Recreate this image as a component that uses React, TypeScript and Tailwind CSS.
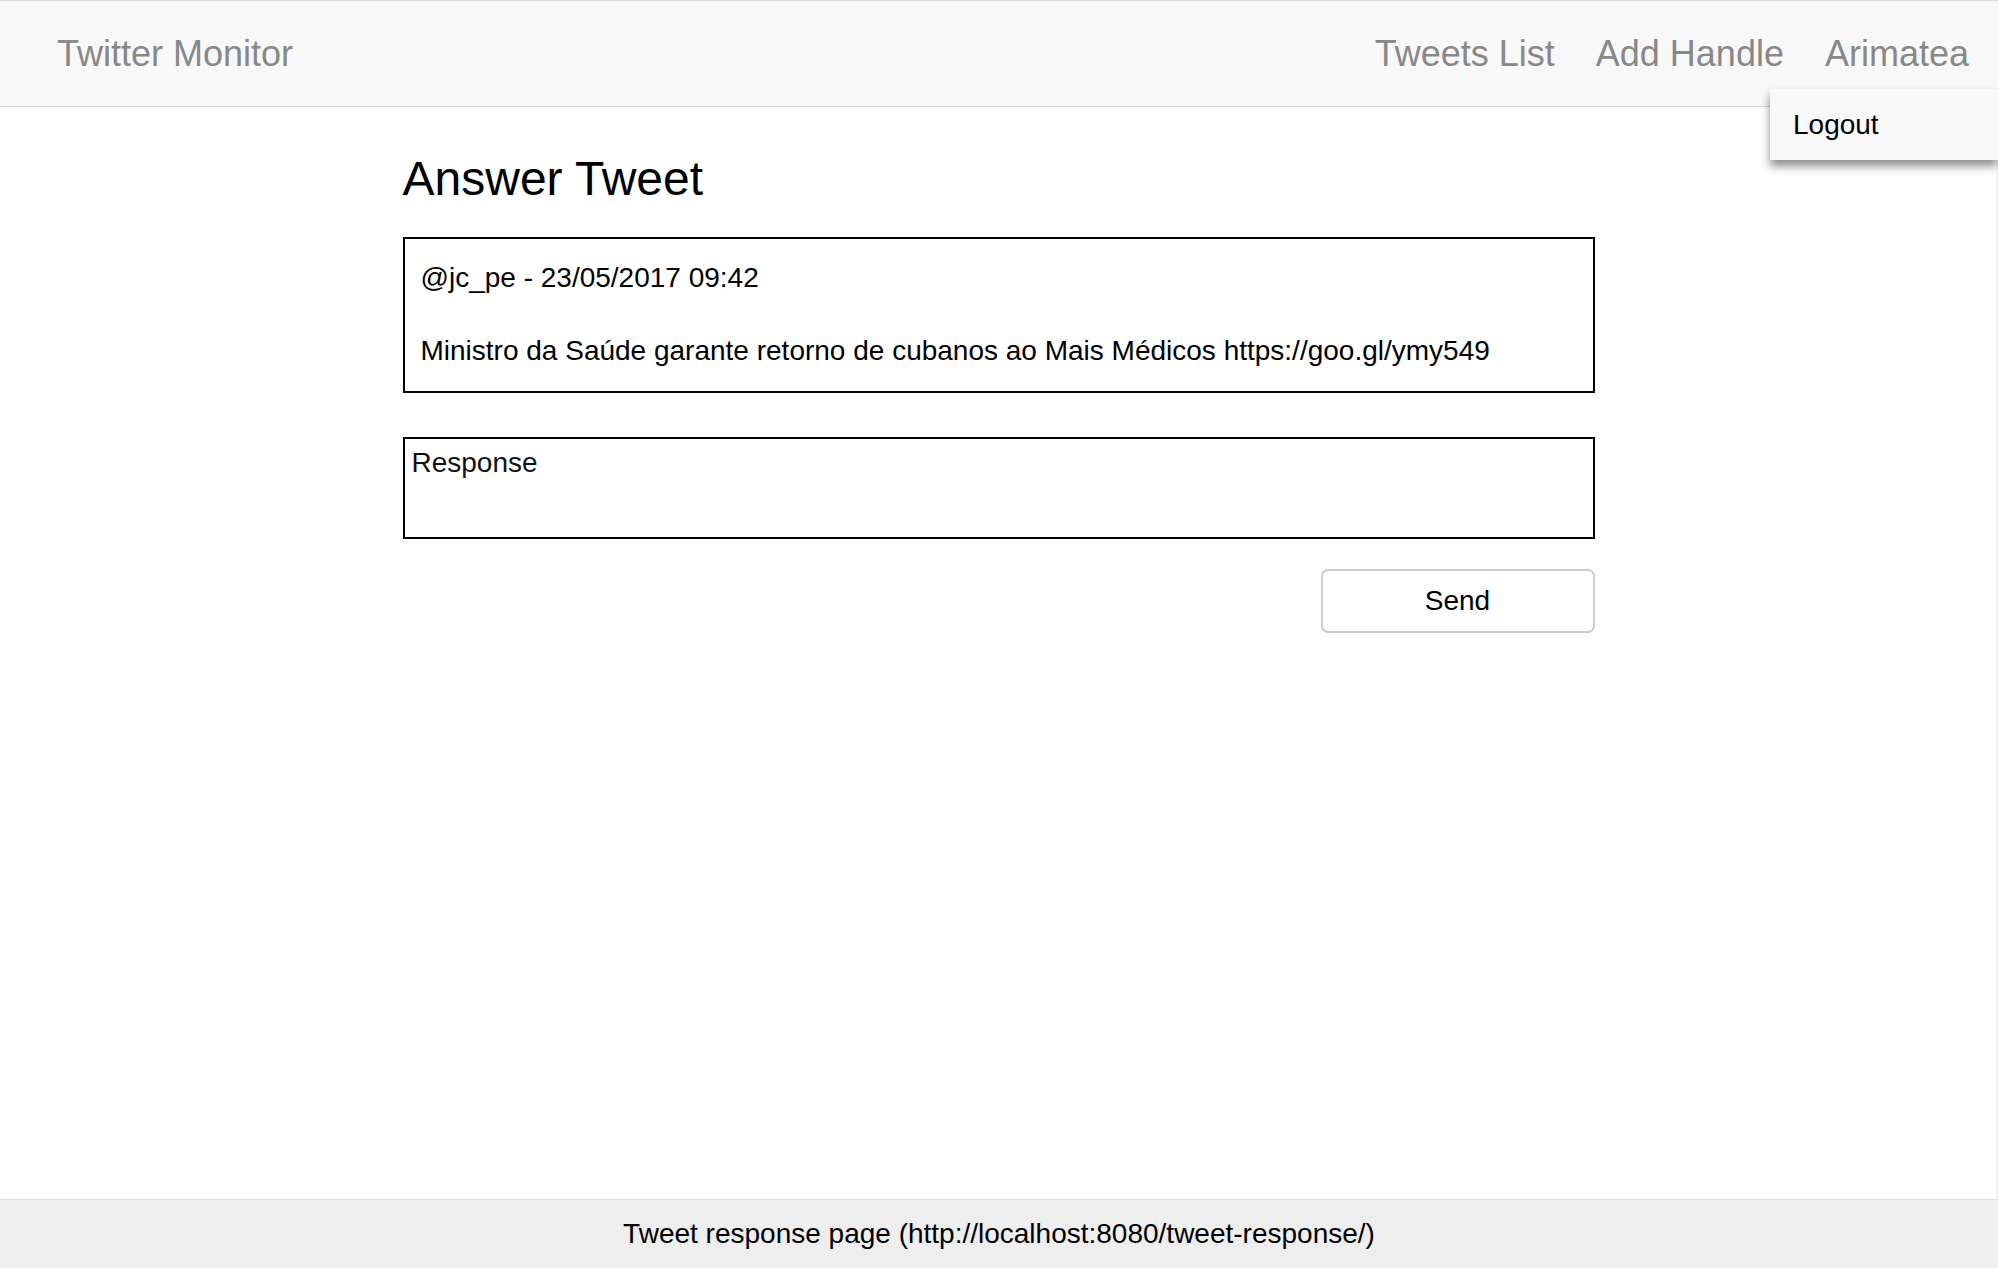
const navLinks = ["Tweets List", "Add Handle", "Arimatea"];

const Navbar = () => {
  return (
    <nav className="relative h-[107px] bg-[#f8f8f8] border-t border-b border-[#d9d9d9] flex items-center justify-between pl-[57px] pr-[29px]">
      <a className="text-[36px] leading-[36px] text-[#888888]">Twitter Monitor</a>
      <ul className="flex items-center gap-[41px]">
        {navLinks.map((link) => (
          <li key={link} className="text-[36px] leading-[36px] text-[#888888]">
            {link}
          </li>
        ))}
      </ul>

      <div className="absolute top-[88px] right-0 w-[228px] h-[71px] bg-[#f9f9f9] flex items-center pl-[23px] shadow-[0_6px_9px_rgba(0,0,0,0.45)] z-10">
        <span className="text-[28px] leading-[28px] text-black">Logout</span>
      </div>
    </nav>
  );
};

const App = () => {
  return (
    <div className="min-h-screen flex flex-col bg-white text-black font-['Liberation_Sans',Arial,sans-serif]">
      <Navbar />

      <main className="flex-1 border-r border-[#e4e4e4]">
        <div className="w-[1192px] mx-auto">
          <h2 className="mt-[48px] mb-[34px] text-[48px] leading-[48px]">Answer Tweet</h2>

          <div className="border-2 border-black pl-[16px] pt-[25px] pb-[26px]">
            <p className="text-[28px] leading-[28px]">@jc_pe - 23/05/2017 09:42</p>
            <p className="mt-[45px] text-[28px] leading-[28px]">
              Ministro da Saúde garante retorno de cubanos ao Mais Médicos https://goo.gl/ymy549
            </p>
          </div>

          <textarea
            placeholder="Response"
            className="block mt-[44px] w-full h-[102px] border-2 border-black px-[7px] pt-[8px] text-[28px] leading-[32px] resize-none outline-none placeholder:text-[#111]"
          />

          <div className="flex justify-end mt-[30px]">
            <button className="w-[274px] h-[64px] bg-white border-2 border-[#cccccc] rounded-[7px] text-[28px] leading-[28px] text-black">
              Send
            </button>
          </div>
        </div>
      </main>

      <footer className="h-[69px] border-t border-[#dddddd] bg-[#eeeeee] flex items-center justify-center">
        <span className="text-[28px] leading-[28px]">Tweet response page (http://localhost:8080/tweet-response/)</span>
      </footer>
    </div>
  );
};

export default App;
